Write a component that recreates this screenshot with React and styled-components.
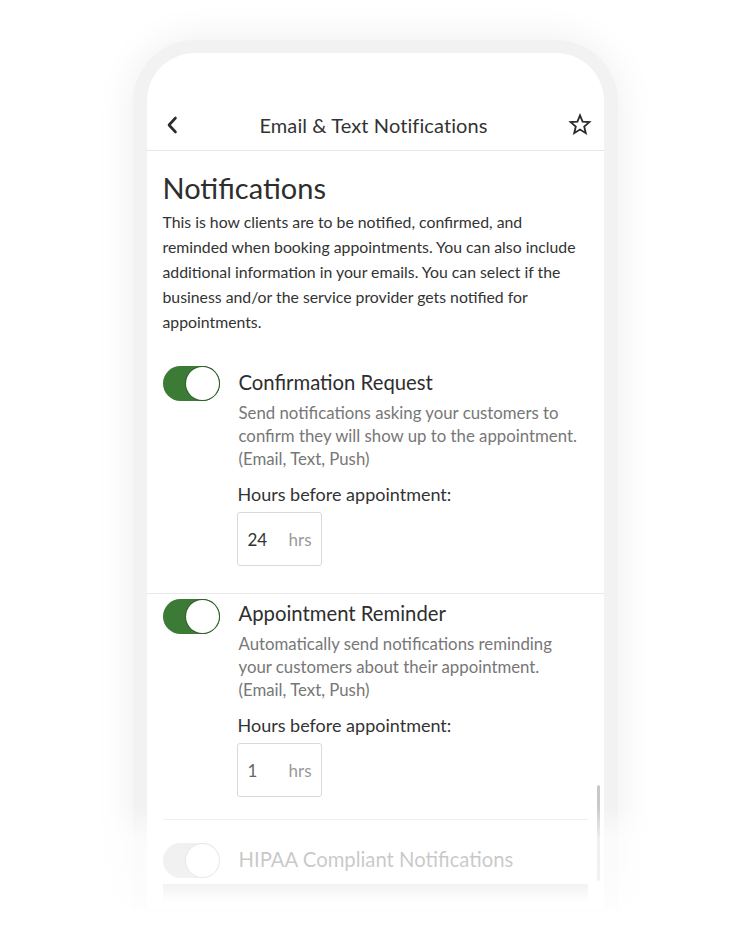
import React from "react";
import styled, { createGlobalStyle } from "styled-components";

const Global = createGlobalStyle`
  html, body { margin: 0; padding: 0; background: #ffffff; }
  body { font-family: Lato, "Liberation Sans", sans-serif; color: #333; }
  * { box-sizing: border-box; }
`;

const Page = styled.div`
  position: relative;
  width: 750px;
  height: 938px;
  overflow: hidden;
  background: #fff;
  display: flex;
  justify-content: center;
  padding-top: 40px;
`;

const Phone = styled.div`
  position: relative;
  width: 485px;
  height: 870px;
  background: #f2f2f2;
  border-radius: 62px 62px 0 0;
  padding: 13px 14px 0;
  box-shadow: 0 0 40px rgba(0, 0, 0, 0.07);
`;

const Screen = styled.div`
  position: relative;
  height: 100%;
  background: #fff;
  border-radius: 48px 48px 0 0;
  overflow: hidden;
  display: flex;
  flex-direction: column;
`;

const StatusSpace = styled.div`
  height: 47px;
  flex: none;
`;

const Header = styled.header`
  height: 51px;
  flex: none;
  display: flex;
  align-items: center;
  justify-content: space-between;
  padding: 0 11px 0 18px;
  border-bottom: 1px solid #e6e6e6;
`;

const HeaderTitle = styled.h1`
  margin: 0;
  font-size: 20px;
  font-weight: 400;
  color: #333;
  letter-spacing: 0.1px;
`;

const IconButton = styled.span`
  display: flex;
  align-items: center;
  justify-content: center;
  width: ${(p) => p.$w}px;
  height: 24px;
`;

const Content = styled.div`
  padding: 20px 16px 0;
  flex: none;
`;

const Heading = styled.h2`
  margin: 0;
  font-size: 29px;
  line-height: 34px;
  font-weight: 400;
  color: #2e2e2e;
`;

const Intro = styled.p`
  margin: 4px 0 0;
  font-size: 15.8px;
  line-height: 25px;
  color: #333;
`;

const Item = styled.section`
  display: grid;
  grid-template-columns: 57px 1fr;
  column-gap: 19px;
  padding: ${(p) => p.$pad};
  margin: ${(p) => (p.$inset ? "0 16px" : "0")};
  border-bottom: ${(p) => (p.$divider ? "1px solid #e8e8e8" : "none")};
  flex: none;
`;

const Toggle = styled.span`
  position: relative;
  display: block;
  width: 57px;
  height: 35px;
  border-radius: 18px;
  background: ${(p) => (p.$on ? "#3c7b36" : "#c9c9c9")};
`;

const Knob = styled.span`
  position: absolute;
  top: 1px;
  right: 1px;
  width: 33px;
  height: 33px;
  border-radius: 50%;
  background: #fff;
  box-shadow: 0 0 0 1px ${(p) => (p.$on ? "#2f5f2b" : "#aaa")};
`;

const ItemBody = styled.div`
  display: flex;
  flex-direction: column;
`;

const ItemTitle = styled.h3`
  margin: ${(p) => p.$top ?? 4}px 0 0;
  font-size: 20.3px;
  line-height: 24px;
  font-weight: 400;
  color: #2e2e2e;
`;

const ItemDesc = styled.p`
  margin: 7px 0 0;
  font-size: 16.8px;
  line-height: 23px;
  color: #777;
`;

const FieldLabel = styled.div`
  margin-top: 13px;
  margin-left: -1px;
  font-size: 18px;
  line-height: 22px;
  color: #333;
`;

const HoursBox = styled.div`
  margin: 7px 0 0 -2px;
  width: 85px;
  height: 54px;
  border: 1px solid #d9d9d9;
  border-radius: 3px;
  display: flex;
  align-items: center;
  justify-content: space-between;
  padding: 0 9px 0 10px;
  font-size: 17px;
`;

const HoursValue = styled.span`
  color: ${(p) => (p.$muted ? "#666" : "#333")};
`;

const Unit = styled.span`
  color: #9a9a9a;
`;

const FooterBand = styled.div`
  margin: 6px 16px 0;
  height: 20px;
  background: linear-gradient(#c8c8c8, #ffffff);
  flex: none;
`;

const Scrollbar = styled.div`
  position: absolute;
  right: 4px;
  top: 732px;
  width: 3px;
  height: 96px;
  border-radius: 2px;
  background: #c8c8c8;
`;

const Fade = styled.div`
  position: absolute;
  left: 0;
  right: 0;
  top: 805px;
  height: 133px;
  pointer-events: none;
  background: linear-gradient(
    to bottom,
    rgba(255, 255, 255, 0) 0px,
    rgba(255, 255, 255, 0.72) 35px,
    rgba(255, 255, 255, 0.76) 75px,
    rgba(255, 255, 255, 0.8) 88px,
    rgba(255, 255, 255, 1) 118px
  );
`;

const Chevron = () => (
  <svg width="12" height="18" viewBox="0 0 12 18" fill="none">
    <path d="M9.5 2 L3 9 L9.5 16" stroke="#2b2b2b" strokeWidth="2.6" strokeLinecap="round" strokeLinejoin="round" />
  </svg>
);

const StarIcon = () => (
  <svg width="24" height="24" viewBox="0 0 24 24" fill="none">
    <path
      d="M12 2.3 L14.6 8.6 L21.4 9.1 L16.2 13.5 L17.8 20.2 L12 16.6 L6.2 20.2 L7.8 13.5 L2.6 9.1 L9.4 8.6 Z"
      stroke="#2b2b2b"
      strokeWidth="1.8"
      strokeLinejoin="miter"
    />
  </svg>
);

const items = [
  {
    title: "Confirmation Request",
    desc: "Send notifications asking your customers to confirm they will show up to the appointment. (Email, Text, Push)",
    hours: "24",
    pad: "32px 16px 27px",
    titleTop: 4,
    divider: true,
    inset: false,
  },
  {
    title: "Appointment Reminder",
    desc: "Automatically send notifications reminding your customers about their appointment. (Email, Text, Push)",
    hours: "1",
    muted: true,
    pad: "5px 0 22px",
    titleTop: 2,
    divider: true,
    inset: true,
  },
];

export default function App() {
  return (
    <>
      <Global />
      <Page>
        <Phone>
          <Screen>
            <StatusSpace />
            <Header>
              <IconButton $w={14}>
                <Chevron />
              </IconButton>
              <HeaderTitle>Email &amp; Text Notifications</HeaderTitle>
              <IconButton $w={24}>
                <StarIcon />
              </IconButton>
            </Header>
            <Content>
              <Heading>Notifications</Heading>
              <Intro>
                This is how clients are to be notified, confirmed, and reminded when booking appointments. You can
                also include additional information in your emails. You can select if the business and/or the service
                provider gets notified for appointments.
              </Intro>
            </Content>
            {items.map((it) => (
              <Item key={it.title} $pad={it.pad} $divider={it.divider} $inset={it.inset}>
                <Toggle $on>
                  <Knob $on />
                </Toggle>
                <ItemBody>
                  <ItemTitle $top={it.titleTop}>{it.title}</ItemTitle>
                  <ItemDesc>{it.desc}</ItemDesc>
                  <FieldLabel>Hours before appointment:</FieldLabel>
                  <HoursBox>
                    <HoursValue $muted={it.muted}>{it.hours}</HoursValue>
                    <Unit>hrs</Unit>
                  </HoursBox>
                </ItemBody>
              </Item>
            ))}
            <Item $pad="23px 0 0" $inset>
              <Toggle>
                <Knob />
              </Toggle>
              <ItemBody>
                <ItemTitle>HIPAA Compliant Notifications</ItemTitle>
              </ItemBody>
            </Item>
            <FooterBand />
            <Scrollbar />
          </Screen>
        </Phone>
        <Fade />
      </Page>
    </>
  );
}
